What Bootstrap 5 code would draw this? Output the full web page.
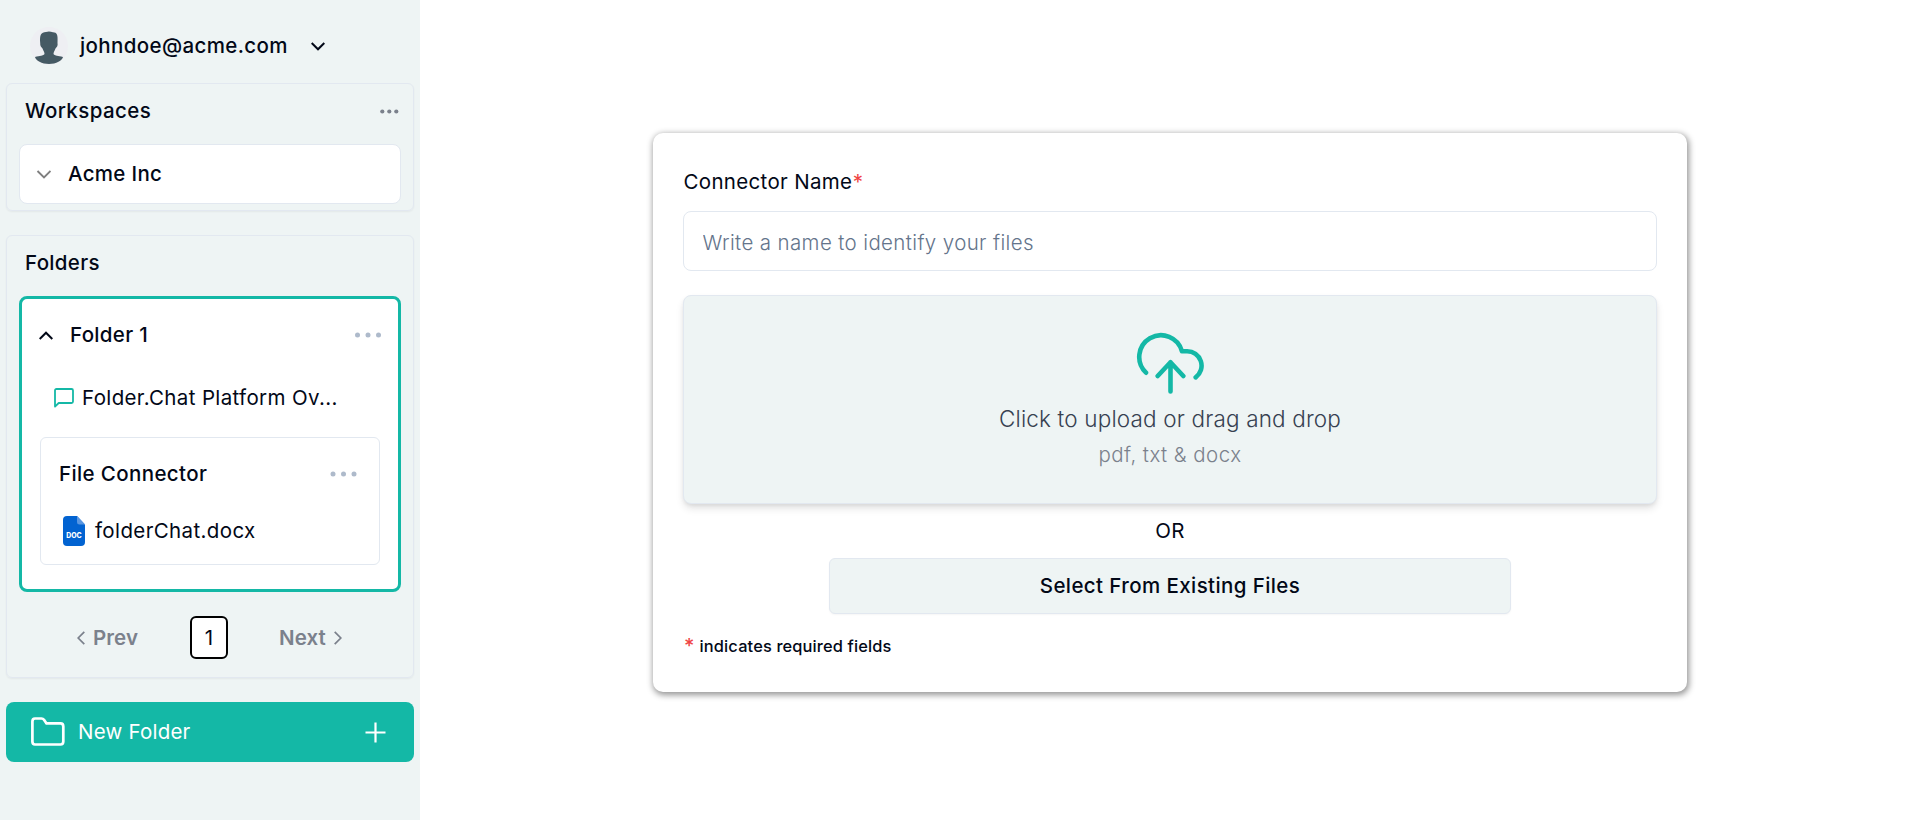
<!DOCTYPE html>
<html lang="en">
<head>
<meta charset="utf-8">
<meta name="viewport" content="width=device-width, initial-scale=1">
<title>Folder.Chat</title>
<link href="https://cdn.jsdelivr.net/npm/bootstrap@5.3.0/dist/css/bootstrap.min.css" rel="stylesheet">
<style>
body{font-family:Inter,sans-serif;font-size:20.5px;line-height:30px;letter-spacing:.32px;color:#020817;background:#fff;height:820px;overflow:hidden}
svg{display:block;flex:none}
.side{width:420px;background:#eef4f4;padding:0 6px}
.account{height:83px;padding:9px 0 0 24px}
.panel{border:1px solid #e2e8f0;border-radius:6px;box-shadow:0 1px 2px rgba(0,0,0,.05)}
.panel-head{height:54px}
.ws{height:128px;padding:0 12px}
.ws .panel-head,.folders .panel-head{padding:0 2px 0 6px}
.ws-item{height:60px;margin-top:6px;border:1px solid #e2e8f0;border-radius:8px;padding-left:16px}
.folders{height:443px;margin-top:24px;padding:0 12px}
.folder{height:296px;margin-top:6px;border:3px solid #14b8a6;border-radius:8px;padding:0 18px}
.conn{height:128px;border:1px solid #e2e8f0;border-radius:6px;padding:0 18px}
.pager{height:43px;margin-top:24px;color:#7b818c;letter-spacing:.1px}
.page-no{width:38px;height:43px;border:2px solid #000;border-radius:6px;color:#020817}
.new-btn{height:60px;margin-top:24px;border-radius:8px;background:#14b8a6;padding:0 28px 0 24px;letter-spacing:.22px}
.form-card{width:1034px;height:559px;margin-top:5px;border-radius:10px;padding:0 30px;box-shadow:1px 2px 6px 1px rgba(0,0,0,.42)}
.name-input.form-control{height:60px;border:1px solid #e2e8f0;border-radius:8px;font-size:20.5px;font-weight:300;padding:2px 18px 0 18.5px;letter-spacing:.37px}
.name-input::placeholder{color:#64748b;opacity:1}
.drop{height:209px;margin-top:24px;border:1px solid #e2e8f0;border-radius:8px;background:#eef4f4;box-shadow:0 5px 8px -1px rgba(0,0,0,.12),0 2px 4px -1px rgba(0,0,0,.08)}
.pick.btn{width:682px;height:56px;background:#eef4f4;border:1px solid #e2e8f0;border-radius:6px;font-size:20.5px;font-weight:500;color:#020817;letter-spacing:.4px;box-shadow:0 1px 2px rgba(0,0,0,.04)}
.req{color:#ef4444}
.fw5{font-weight:500}
.t-mail{margin-left:12px;margin-right:23px;letter-spacing:.38px}
.t-ws{letter-spacing:.4px}
.t-acme{margin-left:17px}
.t-f1{margin-left:17px}
.f-head{height:72px;margin:0 -1px}
.f-chat{height:54px;padding-left:14px}
.t-chat{margin-left:8px;letter-spacing:.36px}
.conn{margin-top:12px;letter-spacing:.38px}
.c-head{height:72px;padding-right:4px}
.c-file{height:42px;padding-left:4px}
.t-docx{margin-left:10px}
.p-l{margin-left:58px}
.t-prev{margin-left:8px;width:97px}
.t-next{margin-left:51px}
.p-r{margin-left:8px}
.t-new{margin-left:12px}
.t-label{margin-top:34px;margin-bottom:14px;padding-left:.5px}
.t-label .req{margin-left:.5px}
.cloud{margin-top:36px}
.t-click{font-size:22.5px;font-weight:300;color:#374151;margin-top:10px;letter-spacing:.16px}
.t-pdf{font-weight:300;color:#7b818c;margin-top:6px;letter-spacing:.45px}
.t-or{margin-top:12px;margin-bottom:12px}
.note{margin-top:17px;font-size:16.4px;letter-spacing:.14px}
.star{font-size:20px;margin:0 5px 0 1px}
</style>
</head>
<body class="d-flex">
<aside class="side d-flex flex-column flex-shrink-0">
  <div class="account d-flex align-items-center">
    <svg width="38" height="38" viewBox="0 0 38 38"><circle cx="19" cy="19" r="19" fill="#eeeff3"/><path fill="#455a64" d="M10.200 16C9.500 8 11 5.300 16 5Q19 4 23 5.200C27 5.500 28 7 27.500 16C28 18.500 27 20 25.500 21.500C24.500 24 23.500 25 23.500 27C25 29 28 28.500 33 30C32.500 33.500 26 37 19 37S5.500 33.500 5 30C10 28.500 13 29 14.500 27C14.500 25 13.500 24 12.500 21.500C11 20 10 18.500 10.200 16Z"/></svg>
    <span class="fw5 t-mail">johndoe@acme.com</span>
    <svg width="14" height="9" viewBox="0 0 14 9" fill="none" stroke="#020817" stroke-width="2"><path d="M.7 1 7 7.300 13.300 1"/></svg>
  </div>
  <section class="panel ws">
    <div class="panel-head d-flex align-items-center justify-content-between"><span class="fw5 t-ws">Workspaces</span>
      <svg width="19" height="5" fill="#7b818c"><circle cx="2.300" cy="2.500" r="2.100"/><circle cx="9.300" cy="2.500" r="2.100"/><circle cx="16.300" cy="2.500" r="2.100"/></svg></div>
    <div class="ws-item bg-white d-flex align-items-center">
      <svg width="15" height="9" viewBox="0 0 15 9" fill="none" stroke="#7f7f7f" stroke-width="1.900"><path d="M1.500 1 8 7.500 14.500 1"/></svg>
      <span class="fw5 t-acme">Acme Inc</span>
    </div>
  </section>
  <section class="panel folders">
    <div class="panel-head d-flex align-items-center"><span class="fw5">Folders</span></div>
    <div class="folder bg-white">
      <div class="f-head d-flex align-items-center">
        <svg width="14" height="9" viewBox="0 0 14 9" fill="none" stroke="#020817" stroke-width="2"><path d="M.7 8 7 1.700 13.300 8"/></svg>
        <span class="fw5 t-f1">Folder 1</span>
        <svg class="ms-auto" width="27" height="6" fill="#aebacb"><circle cx="3.500" cy="3" r="2.500"/><circle cx="14" cy="3" r="2.500"/><circle cx="24.500" cy="3" r="2.500"/></svg>
      </div>
      <div class="f-chat d-flex align-items-center">
        <svg width="20" height="20" viewBox="0 0 20 20" fill="none" stroke="#14b8a6" stroke-width="1.800" stroke-linejoin="round"><path d="M1 18.600V2.500C1 1.500 1.600 1 2.500 1H17.500C18.500 1 19 1.600 19 2.500V13.500C19 14.500 18.500 15 17.500 15H4.700Z"/></svg>
        <span class="t-chat">Folder.Chat Platform Ov...</span>
      </div>
      <div class="conn">
        <div class="c-head d-flex align-items-center justify-content-between"><span class="fw5">File Connector</span>
          <svg width="27" height="6" fill="#aebacb"><circle cx="3" cy="3" r="2.500"/><circle cx="13.500" cy="3" r="2.500"/><circle cx="24" cy="3" r="2.500"/></svg></div>
        <div class="c-file d-flex align-items-center">
          <svg width="22" height="30" viewBox="0 0 22 30"><path fill="#0263d1" d="M4 0H14L22 8.500V26Q22 30 18 30H4Q0 30 0 26V4Q0 0 4 0Z"/><path fill="#5a97e2" d="M14 0 22 8.500H16.500Q14 8.500 14 6Z"/><text x="11" y="21.500" text-anchor="middle" textLength="15.500" lengthAdjust="spacingAndGlyphs" font-size="7.500" font-weight="800" letter-spacing="0" fill="#fff">DOC</text></svg>
          <span class="t-docx">folderChat.docx</span>
        </div>
      </div>
    </div>
    <div class="pager d-flex align-items-center">
      <svg class="p-l" width="8" height="14" viewBox="0 0 8 14" fill="none" stroke="#7b818c" stroke-width="1.700"><path d="M7.300.8 1.200 7 7.300 13.200"/></svg>
      <span class="fw-semibold t-prev">Prev</span>
      <span class="page-no bg-white d-flex align-items-center justify-content-center">1</span>
      <span class="fw-semibold t-next">Next</span>
      <svg class="p-r" width="8" height="14" viewBox="0 0 8 14" fill="none" stroke="#7b818c" stroke-width="1.700"><path d="M.7.8 6.800 7 .7 13.200"/></svg>
    </div>
  </section>
  <div class="new-btn d-flex align-items-center text-white">
    <svg width="36" height="30" viewBox="0 0 36 30" fill="none" stroke="#fff" stroke-width="2.700" stroke-linejoin="round"><path d="M5 1.500H11.500Q13 1.500 14 2.800L16.500 6.400H30.500Q33.300 6.400 33.300 9.400V24.600Q33.300 27.500 30.500 27.500H5Q2.400 27.500 2.400 24.600V4.500Q2.400 1.500 5 1.500Z"/></svg>
    <span class="t-new">New Folder</span>
    <svg class="ms-auto" width="21" height="21" viewBox="0 0 21 21" stroke="#fff" stroke-width="2.200"><path d="M10.500.5V20.500M.5 10.500H20.500"/></svg>
  </div>
</aside>
<main class="flex-grow-1 d-flex align-items-center justify-content-center">
  <div class="form-card bg-white d-flex flex-column">
    <label class="t-label" for="cname">Connector Name<span class="req">*</span></label>
    <input id="cname" class="form-control name-input" placeholder="Write a name to identify your files">
    <div class="drop d-flex flex-column align-items-center">
      <svg class="cloud" width="68" height="62" viewBox="0 0 68 62" fill="none" stroke="#14b8a6" stroke-width="4.600" stroke-linecap="round" stroke-linejoin="round"><path d="M10 40.700A21.750 21.750 0 1 1 46 19.300H51A14.400 14.400 0 0 1 59.700 45.300M34.500 59.500V30.300M21.700 44 34.500 30.300 47.300 44"/></svg>
      <span class="t-click">Click to upload or drag and drop</span>
      <span class="t-pdf">pdf, txt &amp; docx</span>
    </div>
    <div class="t-or text-center">OR</div>
    <button class="btn pick align-self-center" type="button">Select From Existing Files</button>
    <div class="note d-flex fw5"><span class="req star">*</span><span>indicates required fields</span></div>
  </div>
</main>
<script src="https://cdn.jsdelivr.net/npm/bootstrap@5.3.0/dist/js/bootstrap.bundle.min.js"></script>
</body>
</html>
